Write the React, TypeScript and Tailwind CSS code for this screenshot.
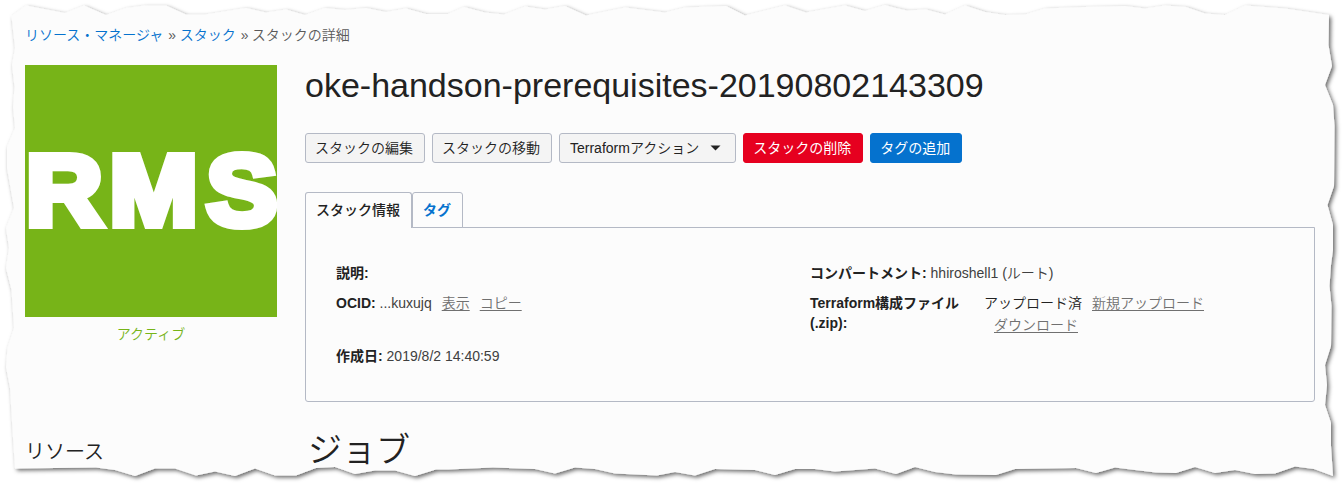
import React from 'react';

const PAPER =
  '11.5,16 26,5.5 65,13 84,5.5 106,15 126,8 145,5.5 166,5.5 186,14.5 205,14.5 246,8 266,12.5 286,9.5 305,15 325,8 345,10 366,8 386,12 406,8.5 426,14 448,14 464,7 485,12.5 504,14.5 525,6.5 545,9.5 565,6 586,15.5 625,7.5 665,12.5 685,7.5 726,6 745,15.5 785,5.5 806,12.5 845,5.5 865,11 885,5 896,8 907,10.5 926,9.5 945,14.5 965,5.5 985,12 1005,15 1025,14.5 1045,8.5 1085,7 1125,6 1145,8.5 1165,5.5 1186,7 1205,13.5 1225,15 1245,5.5 1285,8.5 1329,15 1328.5,45 1332,66 1325,85 1333,105 1334.5,126 1334,186 1327.5,205 1333,225 1333,250 1331,265 1329.5,286 1331.5,306 1331,346 1325,365 1327,385 1325,405 1331,423 1331,446 1333,476 1314,469 1295,466.5 1275,473.5 1255,474 1235,470 1215,473 1195,467 1176,473 1156,472.5 1135,470 1115,467.5 1096,473 1076,468 1015,469 996,475 956,474.5 935,472 915,467 896,474 875,468.5 835,471.5 815,469 795,469 775,475 755,470 715,469 695,475.5 675,472 657,475.5 615,473.5 595,469 575,467.5 555,473.5 535,469 493,467.5 448,469.5 436,469.5 415,476 395,470.5 375,470.5 355,474 335,467 316,468 296,475.5 275,475.5 255,468.5 235,476 215,471.5 196,475.5 175,468.5 155,468.5 135,476 115,470 96,467.5 15,468.5 12.5,430 10,388 6,367 7.5,348 14,328 11.5,290 6,268 9,248 6,228 14,208 7,168 7,147 15,128 13,107 14.5,87 12,65 15,48';

function TornPaper() {
  return (
    <svg className="absolute inset-0 h-[486px] w-[1344px]" viewBox="0 0 1344 486">
      <defs>
        <filter id="paper-shadow" x="-2%" y="-4%" width="104%" height="108%">
          <feDropShadow dx="2" dy="2" stdDeviation="2.2" floodColor="#000" floodOpacity="0.6" />
        </filter>
      </defs>
      <polygon points={PAPER} fill="#fcfcfc" filter="url(#paper-shadow)" />
    </svg>
  );
}

function Button({ tone, children }: { tone: string; children: React.ReactNode }) {
  return (
    <button className={`flex h-[30px] items-center rounded-[3px] border pr-[11px] pl-[9px] leading-[20px] whitespace-nowrap ${tone}`}>
      {children}
    </button>
  );
}

const plain = 'border-[#b4b9c5] bg-[#f4f4f4] font-[350] text-[#222]';

function Link({ children }: { children: React.ReactNode }) {
  return <a className="font-[350] text-[#707070] underline underline-offset-[2px]">{children}</a>;
}

export default function App() {
  return (
    <div className="relative h-[486px] w-[1344px] overflow-hidden bg-white font-['Liberation_Sans','Noto_Sans_CJK_JP',sans-serif] text-[14px] leading-[20px] text-[#222]">
      <TornPaper />
      <div className="relative px-[25px] pt-[25px]">
        <nav className="flex h-[20px] gap-[5px] font-[350] whitespace-nowrap text-[#5a5a5a]">
          <a className="text-[#0572ce]">リソース・マネージャ</a>
          <span className="w-[6.5px]">»</span>
          <a className="text-[#0572ce]">スタック</a>
          <span className="w-[6px]">»</span>
          <span>スタックの詳細</span>
        </nav>

        <div className="mt-[20px] flex gap-[28px]">
          <aside className="w-[252px] shrink-0">
            <div className="h-[252px] bg-[#77b418]">
              <svg className="h-[252px] w-[252px]" viewBox="0 0 252 252">
                <text
                  x="1 79.8 171.3"
                  y="160"
                  transform="scale(1.06 1)"
                  className="fill-white stroke-white stroke-[8px] font-['Liberation_Sans',sans-serif] text-[100px] font-bold"
                >
                  RMS
                </text>
              </svg>
            </div>
            <p className="mt-[7px] text-center font-[350] text-[#77b418]">アクティブ</p>
            <h2 className="mt-[93px] text-[20px] leading-[30px] font-[350]">リソース</h2>
          </aside>

          <main className="w-[1010px]">
            <h1 className="h-[40px] text-[34px] leading-[40px] whitespace-nowrap">oke-handson-prerequisites-20190802143309</h1>
            <div className="mt-[28px] flex gap-[7px]">
              <Button tone={plain}>スタックの編集</Button>
              <Button tone={plain}>スタックの移動</Button>
              <Button tone={plain}>
                <span className="pl-px">Terraformアクション</span>
                <svg className="mr-[3px] ml-[11px] h-[6px] w-[11px]" viewBox="0 0 11 6">
                  <path d="M0.5 0.5H10.5L5.5 5.5Z" fill="#222" />
                </svg>
              </Button>
              <Button tone="border-[#e6001f] bg-[#e6001f] text-white">スタックの削除</Button>
              <Button tone="border-[#0572ce] bg-[#0572ce] text-white">タグの追加</Button>
            </div>

            <div className="relative z-10 mt-[29px] -mb-px flex font-medium">
              <div className="h-[36px] w-[107px] rounded-t-[3px] border border-b-0 border-[#b4b9c5] bg-[#fcfcfc] pt-[7px] pl-[10px]">スタック情報</div>
              <div className="h-[36px] w-[51px] rounded-t-[3px] border border-[#b4b9c5] bg-[#fcfcfc] pt-[7px] pl-[10px] font-bold text-[#0572ce]">タグ</div>
            </div>
            <section className="flex h-[175px] rounded-b-[3px] border border-[#b4b9c5] pt-[35px] pl-[30px]">
              <div className="w-[474px]">
                <p><b>説明:</b></p>
                <p className="mt-[10px] flex gap-[10px]">
                  <span><b>OCID:</b> <span className="text-[#404040]">...kuxujq</span></span>
                  <Link>表示</Link>
                  <Link>コピー</Link>
                </p>
                <p className="mt-[33px]"><b>作成日:</b> <span className="text-[#404040]">2019/8/2 14:40:59</span></p>
              </div>
              <div>
                <p><b>コンパートメント:</b> <span className="font-[350] text-[#404040]">hhiroshell1 (ルート)</span></p>
                <div className="mt-[10px] flex">
                  <b className="w-[174px]">Terraform構成ファイル<br />(.zip):</b>
                  <div className="leading-[22px]">
                    <p className="-mt-px flex gap-[10px]"><span className="font-[350]">アップロード済</span><Link>新規アップロード</Link></p>
                    <p className="pl-[10px]"><Link>ダウンロード</Link></p>
                  </div>
                </div>
              </div>
            </section>
            <h2 className="mt-[28px] pl-[3px] text-[34px] leading-[40px] font-[350]">ジョブ</h2>
          </main>
        </div>
      </div>
    </div>
  );
}
